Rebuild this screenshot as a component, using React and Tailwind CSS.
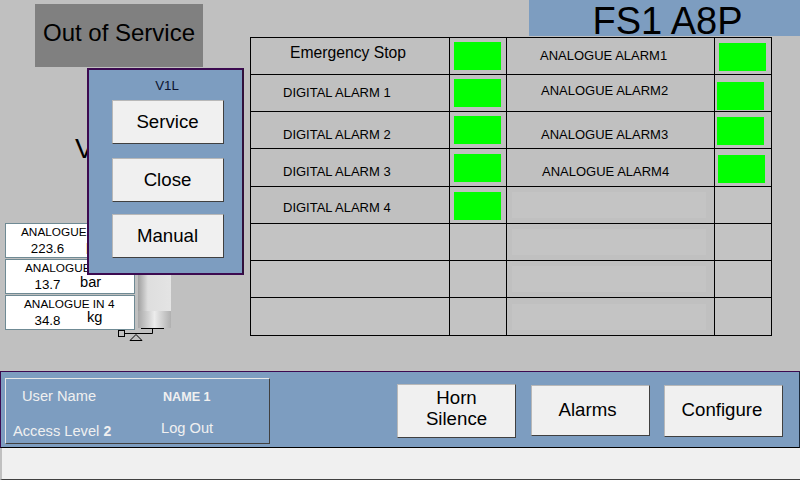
const alarmRows = [
  { label: "Emergency Stop", cls: "text-[15.7px] pl-[39px] pb-[7px]", lamp: "mt-[4px]", right: "ANALOGUE ALARM1", rightCls: "pl-[33px] pb-[1px]", rightLamp: "ml-[4px] mt-[5px]" },
  { label: "DIGITAL ALARM 1", cls: "pl-[32px]", lamp: "mt-[4px]", right: "ANALOGUE ALARM2", rightCls: "pl-[34px] pb-[5px]", rightLamp: "ml-[2px] mt-[7px]" },
  { label: "DIGITAL ALARM 2", cls: "pl-[32px] pt-[10px]", lamp: "mt-[4px]", right: "ANALOGUE ALARM3", rightCls: "pl-[34px] pt-[10px]", rightLamp: "ml-[2px] mt-[5px]" },
  { label: "DIGITAL ALARM 3", cls: "pl-[32px] pt-[9px]", lamp: "mt-[5px]", right: "ANALOGUE ALARM4", rightCls: "pl-[35px] pt-[9px]", rightLamp: "ml-[3px] mt-[6px]" },
  { label: "DIGITAL ALARM 4", cls: "pl-[32px] pt-[5px]", lamp: "mt-[5px]" },
  {},
  {},
  {},
];

const analogueCards = [
  { name: "ANALOGUE IN 2", nameCls: "pl-[15px]", value: "223.6", unit: "bar", unitCls: "left-[80px] top-[19px]" },
  { name: "ANALOGUE IN 3", nameCls: "pl-[19px]", value: "13.7", unit: "bar", unitCls: "left-[74px] top-[16px]" },
  { name: "ANALOGUE IN 4", nameCls: "pl-[18px]", value: "34.8", unit: "kg", unitCls: "left-[81px] top-[15px]" },
];

function HmiButton({ children, className = "" }) {
  return (
    <button className={`border border-[#b8b8b8] border-r-[#404040] border-b-[#404040] bg-[#f0f0f0] text-black text-[18.67px] leading-[21px] ${className}`}>
      {children}
    </button>
  );
}

function AnalogueCard({ card }) {
  return (
    <div className="relative h-[35px] w-[130px] border border-[#6f8a94] bg-white text-black">
      <div className={`text-[11.8px] leading-[14px] pt-[1px] whitespace-nowrap ${card.nameCls}`}>{card.name}</div>
      <div className="w-[83px] text-center text-[13.33px] leading-[16px] pt-[2px]">{card.value}</div>
      <span className={`absolute text-[14.67px] leading-[12px] ${card.unitCls}`}>{card.unit}</span>
    </div>
  );
}

function ValveSymbol() {
  return (
    <svg width="48" height="16" viewBox="0 0 48 16" className="absolute left-[-20px] top-[104px]">
      <rect x="0.5" y="3.5" width="6" height="6" fill="none" stroke="#000" />
      <path d="M6 6.5H34.5V2M23 1.5H46" fill="none" stroke="#000" />
      <path d="M12 13.5L18 7.5L24 13.5Z" fill="none" stroke="#000" />
    </svg>
  );
}

function AlarmTable() {
  return (
    <div className="mt-[1px] w-[522px] h-[299px] border-t border-l border-black grid grid-cols-[199px_57px_208px_57px] grid-rows-[37px_37px_37px_38px_37px_37px_37px_38px]">
      {alarmRows.map((row, i) => (
        <div key={i} className="contents">
          <div className={`border-r border-b border-black flex items-center text-[13px] text-black ${row.label ? "" : "bg-[#c3c3c3]"} ${row.cls || ""}`}>{row.label}</div>
          <div className={`border-r border-b border-black pl-[4px] ${row.label ? "" : "bg-[#c3c3c3]"}`}>
            {row.label && <div className={`w-[47px] h-[28px] bg-[#00ff00] ${row.lamp}`} />}
          </div>
          <div className={`border-r border-b border-black flex items-center text-[13px] text-black ${row.rightCls || ""}`}>
            {row.right || <div className="mx-[5px] w-[194px] h-[26px] bg-[#c4c4c4]" />}
          </div>
          <div className={`border-r border-b border-black ${row.right ? "" : "bg-[#c3c3c3]"}`}>
            {row.right && <div className={`w-[47px] h-[28px] bg-[#00ff00] ${row.rightLamp}`} />}
          </div>
        </div>
      ))}
    </div>
  );
}

export default function App() {
  return (
    <div className="relative w-[800px] h-[480px] overflow-hidden bg-[#c0c0c0] font-['Liberation_Sans',Arial,sans-serif]">
      <div className="flex h-[371px]">
        {/* left side */}
        <div className="w-[250px] shrink-0">
          <div className="ml-[35px] mt-[4px] w-[168px] h-[63px] bg-[#808080] flex items-center justify-center text-[24px] text-black pb-[5px]">
            Out of Service
          </div>
          <div className="ml-[75px] mt-[66px] h-[90px] text-[28px] leading-[32px] text-black">V1L</div>
          <div className="ml-[5px] flex gap-[3px]">
            <div className="flex flex-col gap-[1px]">
              {analogueCards.map((card) => (
                <AnalogueCard key={card.name} card={card} />
              ))}
            </div>
            <div className="relative w-[33px] h-[105px]">
              <div className="h-[88px] bg-gradient-to-r from-[#a0a0a0] via-[#dedede] via-30% to-[#e4e4e4]" />
              <div className="h-[17px] bg-gradient-to-r from-[#a8a8a8] via-[#ececec] to-[#b0b0b0]" />
              <ValveSymbol />
            </div>
          </div>
        </div>

        {/* right side */}
        <div className="flex-1">
          <div className="ml-[279px] h-[36px] bg-[#7d9dc0] text-center text-[38px] leading-[30px] text-black pl-[6px] pt-[6px] whitespace-nowrap">
            FS1 A8P
          </div>
          <AlarmTable />
        </div>
      </div>

      {/* bottom bar */}
      <div className="h-[77px] border border-[#3c0a50] border-r-[#1b2a3c] border-b-black bg-[#7d9dc0] flex items-start pl-[4px]">
        <div className="mt-[6px] w-[265px] h-[66px] border border-[#e8e8e8] border-r-[#404040] border-b-[#404040] grid grid-cols-[146px_1fr] grid-rows-2 text-[14.67px] text-[#f0f0f0]">
          <div className="pl-[16px] pt-[6px]">User Name</div>
          <div className="pl-[11px] pt-[9px] text-[12.6px] font-bold">NAME 1</div>
          <div className="pl-[7px] pt-[9px] whitespace-nowrap">
            Access Level <span className="text-[14px] font-bold">2</span>
          </div>
          <div className="pl-[9px] pt-[6px]">Log Out</div>
        </div>
        <HmiButton className="mt-[12px] ml-[127px] w-[119px] h-[54px] pb-[6px]">
          Horn
          <br />
          Silence
        </HmiButton>
        <HmiButton className="mt-[13px] ml-[15px] w-[119px] h-[51px] pb-[3px] pr-[6px]">Alarms</HmiButton>
        <HmiButton className="mt-[13px] ml-[14px] w-[119px] h-[52px] pb-[3px] pr-[3px]">Configure</HmiButton>
      </div>

      {/* status strip */}
      <div className="h-[32px] bg-[#f0f0f0] border-l-2 border-b border-l-[#c0c0c0] border-b-[#404040]" />

      {/* popup */}
      <div className="absolute left-[87px] top-[68px] w-[157px] h-[207px] border-2 border-[#3c0a50] border-r-[#30103c] bg-[#7d9dc0] flex flex-col items-center">
        <div className="mt-[7px] ml-[3px] h-[22px] text-[13.33px] leading-[18px] text-[#0c1430]">V1L</div>
        <HmiButton className="mt-[1px] ml-[4px] w-[112px] h-[44px] pb-[2px]">Service</HmiButton>
        <HmiButton className="mt-[14px] ml-[4px] w-[112px] h-[44px] pb-[2px]">Close</HmiButton>
        <HmiButton className="mt-[12px] ml-[4px] w-[112px] h-[44px] pb-[2px]">Manual</HmiButton>
      </div>
    </div>
  );
}
